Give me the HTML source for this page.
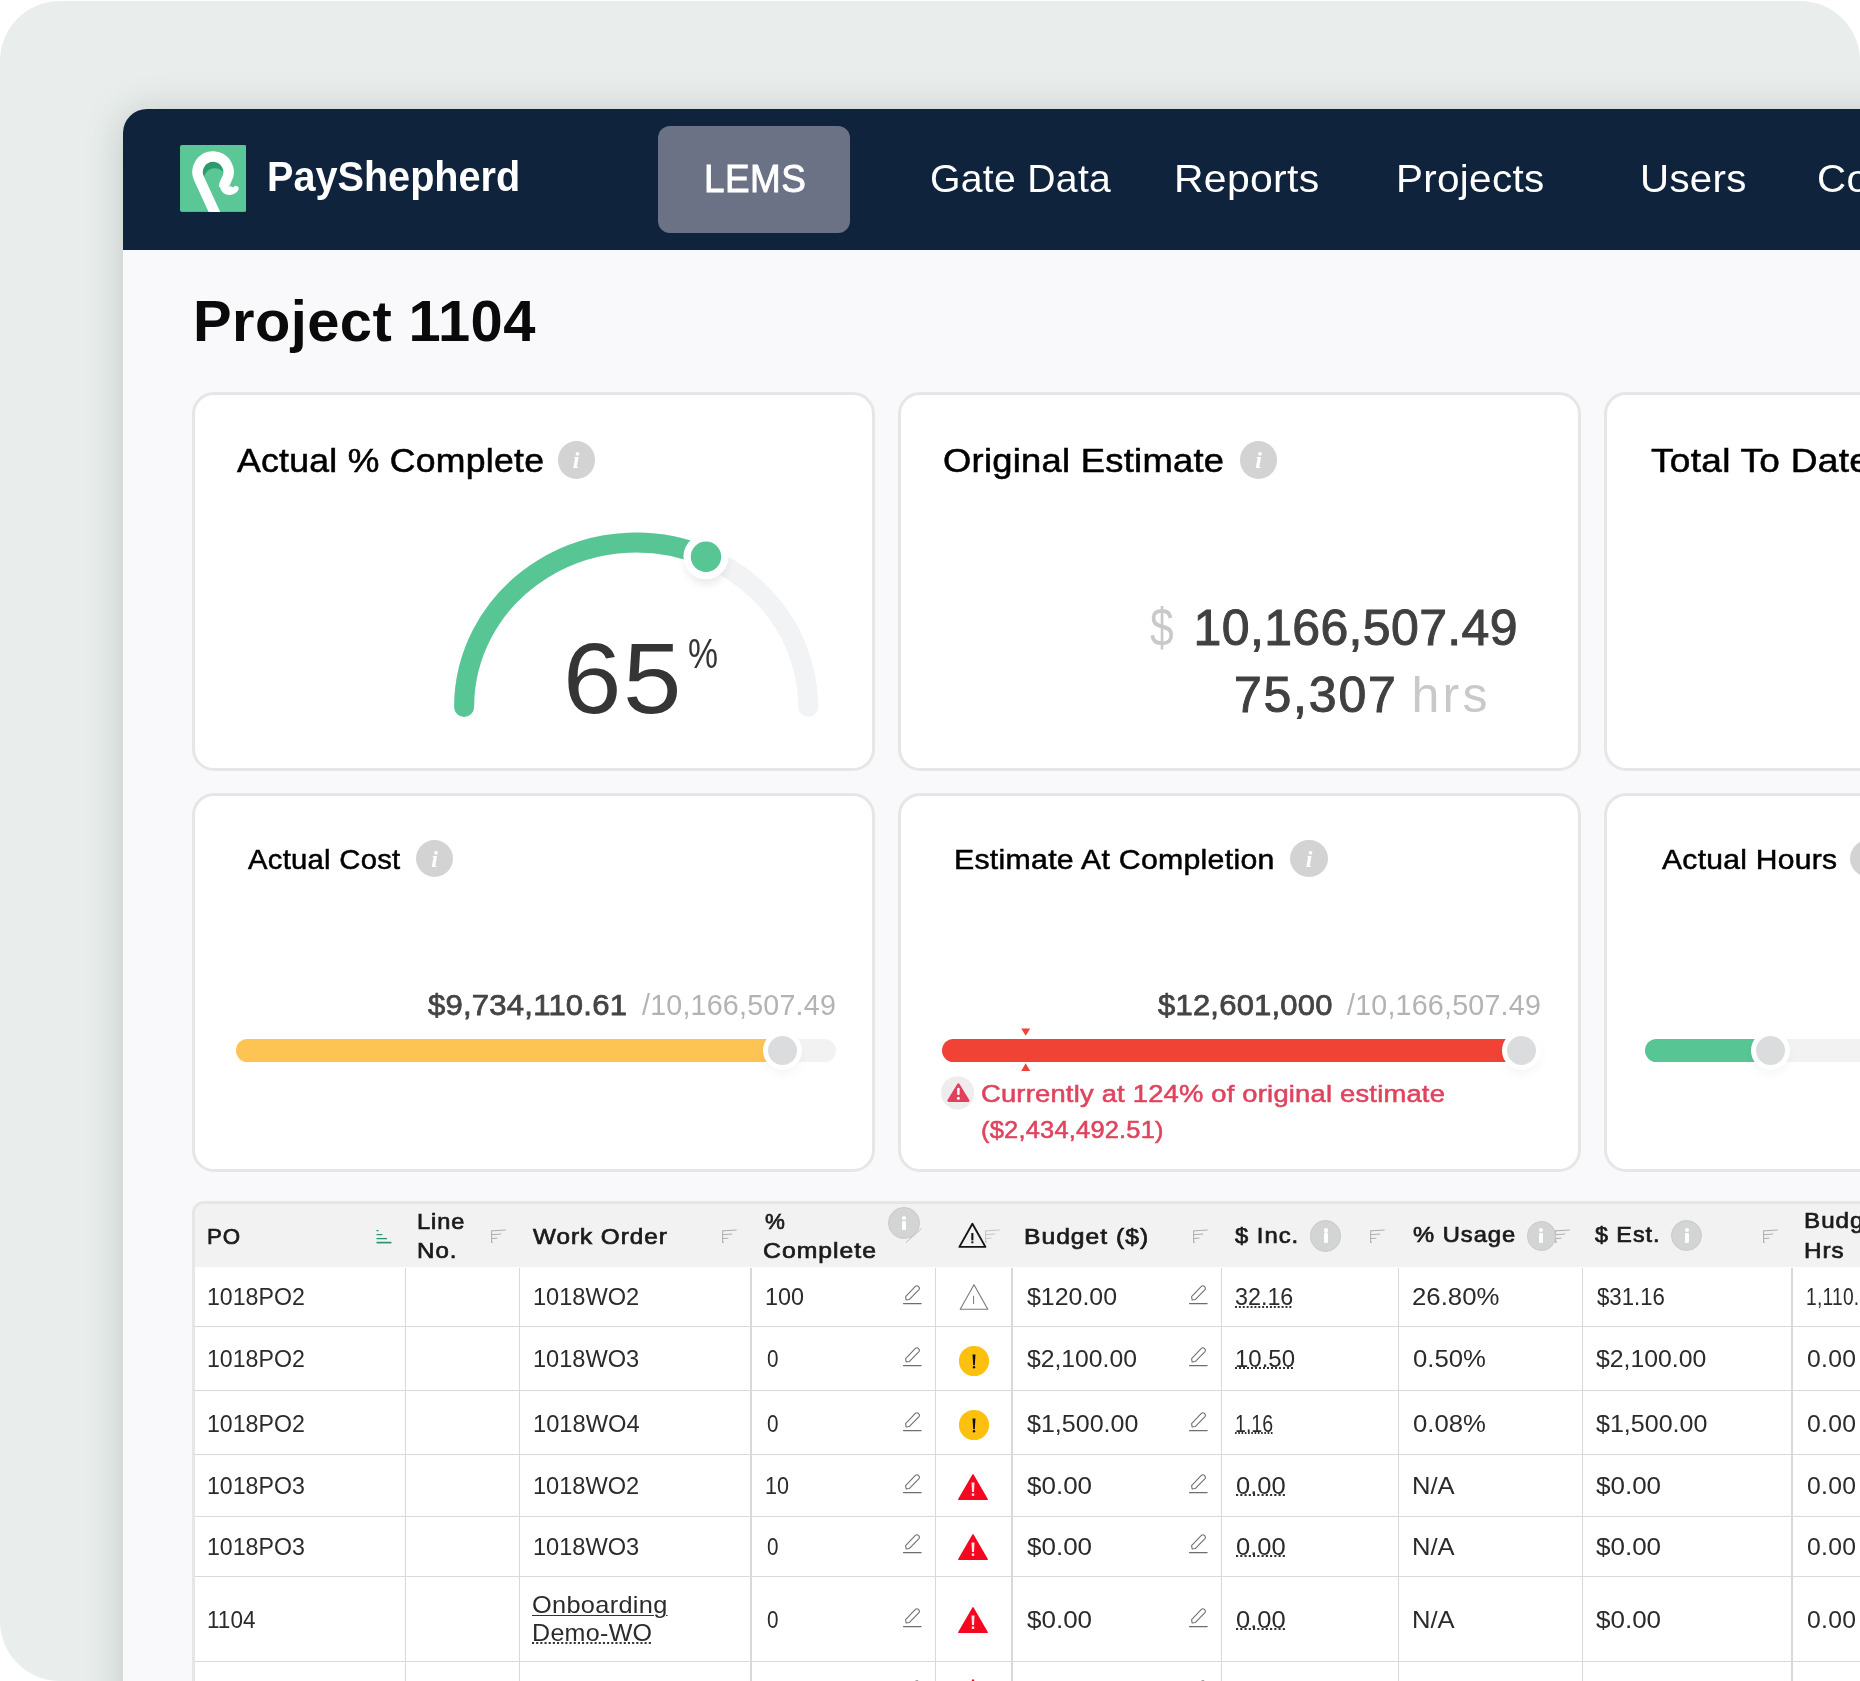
<!DOCTYPE html>
<html lang="en">
<head>
<meta charset="utf-8">
<title>Project 1104 - PayShepherd</title>
<style>
*{box-sizing:border-box;margin:0;padding:0}
html,body{width:1860px;height:1681px;overflow:hidden;background:#fff}
body{font-family:"Liberation Sans",sans-serif;color:#000;position:relative}
.abs{position:absolute}
.t{position:absolute;white-space:nowrap}
#panel{position:absolute;left:0;top:1px;width:1860px;height:1680px;background:#e9eeec;border-radius:60px}
#win{position:absolute;left:123px;top:108.5px;width:1800px;height:1700px;background:#f9f9fb;border-radius:24px 0 0 0;box-shadow:0 4px 38px rgba(40,60,55,.22);overflow:hidden}
#nav{position:absolute;left:0;top:0;width:100%;height:141.5px;background:#0f233c}
.card{position:absolute;background:#fff;border:3px solid #e6e6e7;border-radius:22px}
.info{position:absolute;border-radius:50%;color:#fff;text-align:center;font-family:"Liberation Serif",serif;font-style:italic;font-weight:bold}
.knob{position:absolute;width:39px;height:39px;border-radius:50%;background:#dbdcde;border:5.5px solid #fff;box-shadow:0 5px 9px rgba(0,0,0,.035)}
#tbl{position:absolute;width:1800px;height:600px;border:3px solid #e6e6e7;border-radius:12px 0 0 0;background:#fff}
.hinfo{position:absolute;border-radius:50%;background:#d3d4d4;border:1px solid #c9c9c9}
.hinfo i{position:absolute;left:50%;top:50%;width:4px;height:9.6px;margin:-2.8px 0 0 -2px;background:#fff;border-radius:1.2px}
.hinfo b{position:absolute;left:50%;top:50%;width:4px;height:4.2px;margin:-7.6px 0 0 -2px;background:#fff;border-radius:50%}
#root{position:absolute;left:0;top:0;width:1860px;height:1681px;overflow:hidden;will-change:transform;transform:translateZ(0)}

</style>
</head>
<body>
<div id="root">
<div id="panel"></div>
<div id="win"><div id="nav"></div></div>
<svg class="abs" style="left:179.6px;top:145.2px" width="66.4" height="66.9" viewBox="0 0 1240 1250">
<defs><clipPath id="lc"><rect x="0" y="0" width="1240" height="1250" rx="36"/></clipPath>
<clipPath id="hole"><circle cx="615" cy="510" r="196"/></clipPath></defs>
<g clip-path="url(#lc)">
<rect width="1240" height="1250" fill="#5bc797"/>
<g clip-path="url(#hole)"><rect x="380" y="280" width="480" height="330" fill="#2d9a6c"/><circle cx="650" cy="640" r="205" fill="#5bc797"/></g>
<path d="M665 1300 L357 632 A290 290 0 1 1 866 655 C 835 710 822 745 825 775" fill="none" stroke="#fff" stroke-width="196" stroke-linecap="butt" stroke-linejoin="round"/>
<path d="M824 770 C 832 830 880 862 935 852" fill="none" stroke="#fff" stroke-width="158" stroke-linecap="round"/>
<path d="M935 872 C 990 876 1025 850 1044 816" fill="none" stroke="#fff" stroke-width="104" stroke-linecap="round"/>
</g></svg>
<div class="t" id="brand" style="left:267.41px;top:156.35px;font-size:42px;line-height:42px;color:#fff;font-weight:bold;transform:scaleX(0.9432);transform-origin:0 0;">PayShepherd</div>
<div class="abs " style="left:657.7px;top:125.6px;width:192.5px;height:107.5px;background:#6b7286;border-radius:12px"></div>
<div class="t" id="n_lems" style="left:704.32px;top:159.36px;font-size:39.5px;line-height:39.5px;color:#fff;letter-spacing:0.5px;-webkit-text-stroke:0.9px #fff;transform:scaleX(0.9336);transform-origin:0 0;">LEMS</div>
<div class="t" id="n_gate" style="left:930.11px;top:159.36px;font-size:39.5px;line-height:39.5px;color:#fff;letter-spacing:0.3px;transform:scaleX(0.9913);transform-origin:0 0;">Gate Data</div>
<div class="t" id="n_rep" style="left:1174.39px;top:159.36px;font-size:39.5px;line-height:39.5px;color:#fff;letter-spacing:0.3px;transform:scaleX(1.0362);transform-origin:0 0;">Reports</div>
<div class="t" id="n_proj" style="left:1396.33px;top:159.36px;font-size:39.5px;line-height:39.5px;color:#fff;letter-spacing:0.3px;transform:scaleX(1.0231);transform-origin:0 0;">Projects</div>
<div class="t" id="n_users" style="left:1640.14px;top:159.36px;font-size:39.5px;line-height:39.5px;color:#fff;letter-spacing:0.3px;transform:scaleX(1.0199);transform-origin:0 0;">Users</div>
<div class="t" id="n_co" style="left:1817.36px;top:159.36px;font-size:39.5px;line-height:39.5px;color:#fff;letter-spacing:0.3px;transform:scaleX(1.02);transform-origin:0 0;">Contractors</div>
<div class="t" id="title" style="left:192.68px;top:292.63px;font-size:57.5px;line-height:57.5px;color:#0a0a0a;font-weight:bold;letter-spacing:0.4px;transform:scaleX(1.0069);transform-origin:0 0;">Project 1104</div>
<div class="card" style="left:191.7px;top:391.6px;width:683.3px;height:379.1px"></div>
<div class="card" style="left:897.9px;top:391.6px;width:683.3px;height:379.1px"></div>
<div class="card" style="left:1604.2px;top:391.6px;width:683.3px;height:379.1px"></div>
<div class="card" style="left:191.7px;top:793.4px;width:683.3px;height:379.1px"></div>
<div class="card" style="left:897.9px;top:793.4px;width:683.3px;height:379.1px"></div>
<div class="card" style="left:1604.2px;top:793.4px;width:683.3px;height:379.1px"></div>
<div class="t" id="c1t" style="left:236.89px;top:444.47px;font-size:33.7px;line-height:33.7px;color:#000;letter-spacing:0.25px;-webkit-text-stroke:0.55px #000;transform:scaleX(1.0569);transform-origin:0 0;">Actual % Complete</div>
<div class="info" style="left:557.50px;top:441.40px;width:37.2px;height:37.2px;background:#d3d3d3;font-size:24px;line-height:37.2px;padding-top:0.5px">i</div>
<div class="t" id="c2t" style="left:943.12px;top:444.47px;font-size:33.7px;line-height:33.7px;color:#000;letter-spacing:0.25px;-webkit-text-stroke:0.55px #000;transform:scaleX(1.0787);transform-origin:0 0;">Original Estimate</div>
<div class="info" style="left:1240.00px;top:441.40px;width:37.2px;height:37.2px;background:#d3d3d3;font-size:24px;line-height:37.2px;padding-top:0.5px">i</div>
<div class="t" id="c3t" style="left:1650.50px;top:444.47px;font-size:33.7px;line-height:33.7px;color:#000;letter-spacing:0.25px;-webkit-text-stroke:0.55px #000;transform:scaleX(1.1);transform-origin:0 0;">Total To Date</div>
<div class="t" id="c4t" style="left:247.97px;top:845.54px;font-size:27.6px;line-height:27.6px;color:#000;letter-spacing:0.25px;-webkit-text-stroke:0.5px #000;transform:scaleX(1.06);transform-origin:0 0;">Actual Cost</div>
<div class="info" style="left:416.00px;top:840.20px;width:37.2px;height:37.2px;background:#d3d3d3;font-size:24px;line-height:37.2px;padding-top:0.5px">i</div>
<div class="t" id="c5t" style="left:954.08px;top:845.54px;font-size:27.6px;line-height:27.6px;color:#000;letter-spacing:0.25px;-webkit-text-stroke:0.5px #000;transform:scaleX(1.0969);transform-origin:0 0;">Estimate At Completion</div>
<div class="info" style="left:1290.40px;top:840.30px;width:37.2px;height:37.2px;background:#d3d3d3;font-size:24px;line-height:37.2px;padding-top:0.5px">i</div>
<div class="t" id="c6t" style="left:1661.67px;top:845.54px;font-size:27.6px;line-height:27.6px;color:#000;letter-spacing:0.25px;-webkit-text-stroke:0.5px #000;transform:scaleX(1.0897);transform-origin:0 0;">Actual Hours</div>
<div class="info" style="left:1849.90px;top:840.10px;width:37.2px;height:37.2px;background:#d3d3d3;font-size:24px;line-height:37.2px;padding-top:0.5px">i</div>
<svg class="abs" style="left:430px;top:510px" width="420" height="230" viewBox="430 510 420 230">
<defs><filter id="ks" x="-50%" y="-50%" width="200%" height="200%"><feGaussianBlur stdDeviation="5"/></filter></defs>
<path d="M464.10 707.0 A172.05 164.4 0 0 1 808.20 707.0" fill="none" stroke="#f2f3f5" stroke-width="20" stroke-linecap="round"/>
<path d="M464.10 707.0 A172.05 164.4 0 0 1 706.0 556.76" fill="none" stroke="#58c595" stroke-width="20" stroke-linecap="round"/>
<circle cx="706.0" cy="563.76" r="20" fill="#000" opacity=".09" filter="url(#ks)"/>
<circle cx="706.0" cy="556.76" r="22.6" fill="#fff"/>
<circle cx="706.0" cy="556.76" r="15.2" fill="#58c595"/>
</svg>
<div class="t" id="g65" style="left:562.55px;top:628.15px;font-size:100px;line-height:100px;color:#353535;letter-spacing:1.5px;transform:scaleX(1.0508);transform-origin:0 0;">65</div>
<div class="t" id="gpc" style="left:687.61px;top:633.32px;font-size:42.5px;line-height:42.5px;color:#353535;transform:scaleX(0.7944);transform-origin:0 0;">%</div>
<div class="t" id="c2d" style="left:1149.80px;top:599.59px;font-size:54px;line-height:54px;color:#c9c9c9;transform:scaleX(0.7867);transform-origin:0 0;">$</div>
<div class="t" id="c2n" style="left:1193.60px;top:602.77px;font-size:50px;line-height:50px;color:#404040;letter-spacing:0.346px;-webkit-text-stroke:1.0px #404040;">10,166,507.49</div>
<div class="t" id="c2h" style="left:1233.90px;top:670.47px;font-size:50px;line-height:50px;color:#404040;letter-spacing:1.796px;-webkit-text-stroke:1.0px #404040;">75,307</div>
<div class="t" id="c2u" style="left:1411.40px;top:670.47px;font-size:50px;line-height:50px;color:#c9c9c9;letter-spacing:3.271px;">hrs</div>
<div class="abs " style="left:236.0px;top:1039.0px;width:599.8px;height:22.6px;background:#f2f2f3;border-radius:12px"></div>
<div class="abs " style="left:236.0px;top:1039.0px;width:545.9px;height:22.6px;background:#fdc453;border-radius:12px 0 0 12px"></div>
<div class="knob" style="left:762.70px;top:1030.70px"></div>
<div class="abs " style="left:941.5px;top:1039.0px;width:599.5px;height:22.6px;background:#f2f2f3;border-radius:12px"></div>
<div class="abs " style="left:941.5px;top:1039.0px;width:579.4000000000001px;height:22.6px;background:#f04235;border-radius:12px 0 0 12px"></div>
<div class="knob" style="left:1501.70px;top:1030.70px"></div>
<div class="abs " style="left:1645.0px;top:1039.0px;width:599.8px;height:22.6px;background:#f2f2f3;border-radius:12px"></div>
<div class="abs " style="left:1645.0px;top:1039.0px;width:124.79999999999995px;height:22.6px;background:#58c595;border-radius:12px 0 0 12px"></div>
<div class="knob" style="left:1750.60px;top:1030.70px"></div>
<div class="t" id="c4a" style="left:427.70px;top:990.85px;font-size:29.0px;line-height:29.0px;color:#444;letter-spacing:0.2px;-webkit-text-stroke:0.75px #444;transform:scaleX(1.0716);transform-origin:0 0;">$9,734,110.61</div>
<div class="t" id="c4b" style="left:642.40px;top:990.85px;font-size:29.0px;line-height:29.0px;color:#b3b3b3;letter-spacing:0.2px;transform:scaleX(0.9883);transform-origin:0 0;">/10,166,507.49</div>
<div class="t" id="c5a" style="left:1158.20px;top:990.85px;font-size:29.0px;line-height:29.0px;color:#444;letter-spacing:0.2px;-webkit-text-stroke:0.75px #444;transform:scaleX(1.0688);transform-origin:0 0;">$12,601,000</div>
<div class="t" id="c5b" style="left:1347.40px;top:990.85px;font-size:29.0px;line-height:29.0px;color:#b3b3b3;letter-spacing:0.2px;transform:scaleX(0.9883);transform-origin:0 0;">/10,166,507.49</div>
<svg class="abs" style="left:1020px;top:1026px" width="12" height="48" viewBox="1020 1026 12 48"><path d="M1021.2 1028.4h9l-4.5 7.4z M1021.2 1070.9h9l-4.5 -7.6z" fill="#f04235"/></svg>
<svg class="abs" style="left:940px;top:1075px" width="36" height="36" viewBox="940 1075 36 36"><circle cx="957.6" cy="1092.8" r="16.6" fill="#eeeced"/><path d="M958.4 1084.6 L968.2 1100.6 H948.6 Z" fill="#e0405d" stroke="#e0405d" stroke-width="2.6" stroke-linejoin="round"/><rect x="957.2" y="1087.8" width="2.4" height="7.2" rx="1" fill="#fff"/><circle cx="958.4" cy="1098.2" r="1.5" fill="#fff"/></svg>
<div class="t" id="w1" style="left:980.78px;top:1082.30px;font-size:24.1px;line-height:24.1px;color:#e0435e;letter-spacing:0.2px;-webkit-text-stroke:0.55px #e0435e;transform:scaleX(1.1337);transform-origin:0 0;">Currently at 124% of original estimate</div>
<div class="t" id="w2" style="left:980.53px;top:1118.10px;font-size:24.1px;line-height:24.1px;color:#e0435e;letter-spacing:0.2px;-webkit-text-stroke:0.55px #e0435e;transform:scaleX(1.0557);transform-origin:0 0;">($2,434,492.51)</div>
<div id="tbl" style="left:191.8px;top:1201.3px"></div>
<div class="abs " style="left:194.8px;top:1204.3px;width:1700px;height:63.2px;background:#f2f2f2;border-radius:9px 0 0 0"></div>
<div class="abs " style="left:194.8px;top:1326px;width:1700px;height:1px;background:#ddd8da;"></div>
<div class="abs " style="left:194.8px;top:1390px;width:1700px;height:1px;background:#ddd8da;"></div>
<div class="abs " style="left:194.8px;top:1454px;width:1700px;height:1px;background:#ddd8da;"></div>
<div class="abs " style="left:194.8px;top:1516px;width:1700px;height:1px;background:#ddd8da;"></div>
<div class="abs " style="left:194.8px;top:1576px;width:1700px;height:1px;background:#ddd8da;"></div>
<div class="abs " style="left:194.8px;top:1661px;width:1700px;height:1px;background:#ddd8da;"></div>
<div class="abs " style="left:404.75px;top:1267.5px;width:1.5px;height:500px;background:#dcd8da;"></div>
<div class="abs " style="left:518.75px;top:1267.5px;width:1.5px;height:500px;background:#dcd8da;"></div>
<div class="abs " style="left:750.25px;top:1267.5px;width:1.5px;height:500px;background:#dcd8da;"></div>
<div class="abs " style="left:934.65px;top:1267.5px;width:1.5px;height:500px;background:#dcd8da;"></div>
<div class="abs " style="left:1011.45px;top:1267.5px;width:1.5px;height:500px;background:#dcd8da;"></div>
<div class="abs " style="left:1220.95px;top:1267.5px;width:1.5px;height:500px;background:#dcd8da;"></div>
<div class="abs " style="left:1397.85px;top:1267.5px;width:1.5px;height:500px;background:#dcd8da;"></div>
<div class="abs " style="left:1581.85px;top:1267.5px;width:1.5px;height:500px;background:#dcd8da;"></div>
<div class="abs " style="left:1791.35px;top:1267.5px;width:1.5px;height:500px;background:#dcd8da;"></div>
<div class="t" id="h_po" style="left:206.94px;top:1225.58px;font-size:22px;line-height:22px;color:#1b1b1b;letter-spacing:0.9px;-webkit-text-stroke:0.7px #1b1b1b;transform:scaleX(1.0132);transform-origin:0 0;">PO</div>
<div class="t" id="h_line" style="left:416.90px;top:1210.88px;font-size:22px;line-height:22px;color:#1b1b1b;letter-spacing:0.9px;-webkit-text-stroke:0.7px #1b1b1b;transform:scaleX(1.0718);transform-origin:0 0;">Line</div>
<div class="t" id="h_no" style="left:416.89px;top:1240.28px;font-size:22px;line-height:22px;color:#1b1b1b;letter-spacing:0.9px;-webkit-text-stroke:0.7px #1b1b1b;transform:scaleX(1.0946);transform-origin:0 0;">No.</div>
<div class="t" id="h_wo" style="left:533.09px;top:1225.98px;font-size:22px;line-height:22px;color:#1b1b1b;letter-spacing:0.9px;-webkit-text-stroke:0.7px #1b1b1b;transform:scaleX(1.1023);transform-origin:0 0;">Work Order</div>
<div class="t" id="h_pc" style="left:765.36px;top:1211.38px;font-size:22px;line-height:22px;color:#1b1b1b;letter-spacing:0.9px;-webkit-text-stroke:0.7px #1b1b1b;transform:scaleX(1.0152);transform-origin:0 0;">%</div>
<div class="t" id="h_cmp" style="left:762.87px;top:1240.08px;font-size:22px;line-height:22px;color:#1b1b1b;letter-spacing:0.9px;-webkit-text-stroke:0.7px #1b1b1b;transform:scaleX(1.1249);transform-origin:0 0;">Complete</div>
<div class="t" id="h_bud" style="left:1024.07px;top:1225.58px;font-size:22px;line-height:22px;color:#1b1b1b;letter-spacing:0.9px;-webkit-text-stroke:0.7px #1b1b1b;transform:scaleX(1.1199);transform-origin:0 0;">Budget ($)</div>
<div class="t" id="h_inc" style="left:1234.58px;top:1224.98px;font-size:22px;line-height:22px;color:#1b1b1b;letter-spacing:0.9px;-webkit-text-stroke:0.7px #1b1b1b;transform:scaleX(1.083);transform-origin:0 0;">$ Inc.</div>
<div class="t" id="h_use" style="left:1412.68px;top:1224.38px;font-size:22px;line-height:22px;color:#1b1b1b;letter-spacing:0.9px;-webkit-text-stroke:0.7px #1b1b1b;transform:scaleX(1.0796);transform-origin:0 0;">% Usage</div>
<div class="t" id="h_est" style="left:1595.07px;top:1224.38px;font-size:22px;line-height:22px;color:#1b1b1b;letter-spacing:0.9px;-webkit-text-stroke:0.7px #1b1b1b;transform:scaleX(1.0608);transform-origin:0 0;">$ Est.</div>
<div class="t" id="h_bh1" style="left:1803.79px;top:1209.88px;font-size:22px;line-height:22px;color:#1b1b1b;letter-spacing:0.9px;-webkit-text-stroke:0.7px #1b1b1b;transform:scaleX(1.1);transform-origin:0 0;">Budget</div>
<div class="t" id="h_bh2" style="left:1803.79px;top:1239.58px;font-size:22px;line-height:22px;color:#1b1b1b;letter-spacing:0.9px;-webkit-text-stroke:0.7px #1b1b1b;transform:scaleX(1.1);transform-origin:0 0;">Hrs</div>
<svg class="abs" style="left:376.0px;top:1229.0px" width="17" height="15" viewBox="0 0 17 15"><g stroke="#2a9470" fill="none"><path stroke-width="1.3" d="M0.5 1.6H2.6"/><path stroke-width="1.2" d="M0.5 5.6H6.4"/><path stroke-width="1.3" d="M0.5 9.6H11"/><path stroke-width="1.7" d="M0.5 13.6H15.4"/></g></svg>
<svg class="abs" style="left:490.5px;top:1229.0px" width="16" height="15" viewBox="0 0 16 15"><g stroke="#a9a9a9" stroke-width="0.95" fill="none"><path d="M0.4 1.9L14.6 1.0 M0.4 5.7L10.2 5.0 M0.4 9.6L6.4 9.1 M0.4 13.3L2.0 13.2 M0.6 1.6V13.4" /></g></svg>
<svg class="abs" style="left:722.3px;top:1229.0px" width="16" height="15" viewBox="0 0 16 15"><g stroke="#a9a9a9" stroke-width="0.95" fill="none"><path d="M0.4 1.9L14.6 1.0 M0.4 5.7L10.2 5.0 M0.4 9.6L6.4 9.1 M0.4 13.3L2.0 13.2 M0.6 1.6V13.4" /></g></svg>
<svg class="abs" style="left:904px;top:1226px" width="20" height="18" viewBox="0 0 20 18"><path d="M2 16.6L17.4 2.6" stroke="#b5b5b5" stroke-width="0.9"/></svg>
<div class="hinfo" style="left:888.10px;top:1207.30px;width:32.0px;height:32.0px"><i></i><b></b></div>
<svg class="abs" style="left:984.6px;top:1228.6px" width="16" height="15" viewBox="0 0 16 15"><g stroke="#c2c2c2" stroke-width="0.95" fill="none"><path d="M0.4 1.9L14.6 1.0 M0.4 5.7L10.2 5.0 M0.4 9.6L6.4 9.1 M0.4 13.3L2.0 13.2 M0.6 1.6V13.4" /></g></svg>
<svg class="abs" style="left:955px;top:1219px" width="36" height="32" viewBox="955 1219 36 32"><path d="M972.4 1223.8 L985.4 1246.9 H959.4 Z" fill="none" stroke="#151515" stroke-width="1.9" stroke-linejoin="round"/><rect x="971.3" y="1233.0" width="2.1" height="7.4" fill="#151515"/><rect x="971.3" y="1241.4" width="2.1" height="1.8" fill="#151515"/></svg>
<svg class="abs" style="left:1192.8px;top:1229.0px" width="16" height="15" viewBox="0 0 16 15"><g stroke="#a9a9a9" stroke-width="0.95" fill="none"><path d="M0.4 1.9L14.6 1.0 M0.4 5.7L10.2 5.0 M0.4 9.6L6.4 9.1 M0.4 13.3L2.0 13.2 M0.6 1.6V13.4" /></g></svg>
<div class="hinfo" style="left:1310.10px;top:1220.40px;width:31.2px;height:31.2px"><i></i><b></b></div>
<svg class="abs" style="left:1369.5px;top:1229.0px" width="16" height="15" viewBox="0 0 16 15"><g stroke="#a9a9a9" stroke-width="0.95" fill="none"><path d="M0.4 1.9L14.6 1.0 M0.4 5.7L10.2 5.0 M0.4 9.6L6.4 9.1 M0.4 13.3L2.0 13.2 M0.6 1.6V13.4" /></g></svg>
<svg class="abs" style="left:1555.0px;top:1228.5px" width="16" height="15" viewBox="0 0 16 15"><g stroke="#a9a9a9" stroke-width="0.95" fill="none"><path d="M0.4 1.9L14.6 1.0 M0.4 5.7L10.2 5.0 M0.4 9.6L6.4 9.1 M0.4 13.3L2.0 13.2 M0.6 1.6V13.4" /></g></svg>
<div class="hinfo" style="left:1526.50px;top:1221.00px;width:29.6px;height:29.6px"><i></i><b></b></div>
<div class="hinfo" style="left:1671.00px;top:1220.20px;width:31.2px;height:31.2px"><i></i><b></b></div>
<svg class="abs" style="left:1762.8px;top:1228.6px" width="16" height="15" viewBox="0 0 16 15"><g stroke="#a9a9a9" stroke-width="0.95" fill="none"><path d="M0.4 1.9L14.6 1.0 M0.4 5.7L10.2 5.0 M0.4 9.6L6.4 9.1 M0.4 13.3L2.0 13.2 M0.6 1.6V13.4" /></g></svg>
<div class="t" id="r0po" style="left:206.94px;top:1285.48px;font-size:24px;line-height:24px;color:#2b2b2b;transform:scaleX(0.9644);transform-origin:0 0;">1018PO2</div>
<div class="t" id="r0wo" style="left:532.52px;top:1285.48px;font-size:24px;line-height:24px;color:#2b2b2b;transform:scaleX(0.983);transform-origin:0 0;">1018WO2</div>
<div class="t" id="r0pc" style="left:764.63px;top:1285.48px;font-size:24px;line-height:24px;color:#2b2b2b;transform:scaleX(0.9743);transform-origin:0 0;">100</div>
<div class="t" id="r0bud" style="left:1026.70px;top:1285.48px;font-size:24px;line-height:24px;color:#2b2b2b;transform:scaleX(1.0381);transform-origin:0 0;">$120.00</div>
<div class="t" id="r0inc" style="left:1235.40px;top:1285.48px;font-size:24px;line-height:24px;color:#2b2b2b;transform:scaleX(0.9713);transform-origin:0 0;text-decoration:underline dotted #333;text-decoration-thickness:1.5px;text-underline-offset:1px;">32.16</div>
<div class="t" id="r0use" style="left:1412.43px;top:1285.48px;font-size:24px;line-height:24px;color:#2b2b2b;transform:scaleX(1.0742);transform-origin:0 0;">26.80%</div>
<div class="t" id="r0est" style="left:1596.80px;top:1285.48px;font-size:24px;line-height:24px;color:#2b2b2b;transform:scaleX(0.9253);transform-origin:0 0;">$31.16</div>
<div class="t" id="r0bh" style="left:1806.30px;top:1285.48px;font-size:24px;line-height:24px;color:#2b2b2b;letter-spacing:0.3px;transform:scaleX(0.8);transform-origin:0 0;">1,110.00</div>
<svg class="abs" style="left:902.6px;top:1285.2px" width="19" height="20" viewBox="0 0 19 20"><g fill="none" stroke="#6e6e6e" stroke-width="1.05" stroke-linejoin="round" stroke-linecap="round"><path d="M3.1 14.9 L2.6 11.6 L12.6 1.2 Q14.2 0.2 15.6 1.6 Q17 3 16 4.6 L6.2 14.6 Z"/><path d="M0.4 18.6H18.2"/></g></svg>
<svg class="abs" style="left:1189.2px;top:1285.2px" width="19" height="20" viewBox="0 0 19 20"><g fill="none" stroke="#6e6e6e" stroke-width="1.05" stroke-linejoin="round" stroke-linecap="round"><path d="M3.1 14.9 L2.6 11.6 L12.6 1.2 Q14.2 0.2 15.6 1.6 Q17 3 16 4.6 L6.2 14.6 Z"/><path d="M0.4 18.6H18.2"/></g></svg>
<svg class="abs" style="left:957.6px;top:1282.0px" width="32" height="30" viewBox="-16 -15 32 30"><path d="M0 -12.3 L13.8 12.3 H-13.8 Z" fill="none" stroke="#7a7a7a" stroke-width="1.1" stroke-linejoin="round"/><path d="M-0.4 -1.2V7" stroke="#7a7a7a" stroke-width="1"/></svg>
<div class="t" id="r1po" style="left:206.94px;top:1346.88px;font-size:24px;line-height:24px;color:#2b2b2b;transform:scaleX(0.9644);transform-origin:0 0;">1018PO2</div>
<div class="t" id="r1wo" style="left:532.52px;top:1346.88px;font-size:24px;line-height:24px;color:#2b2b2b;transform:scaleX(0.983);transform-origin:0 0;">1018WO3</div>
<div class="t" id="r1pc" style="left:767.00px;top:1346.88px;font-size:24px;line-height:24px;color:#2b2b2b;transform:scaleX(0.8615);transform-origin:0 0;">0</div>
<div class="t" id="r1bud" style="left:1026.80px;top:1346.88px;font-size:24px;line-height:24px;color:#2b2b2b;transform:scaleX(1.0299);transform-origin:0 0;">$2,100.00</div>
<div class="t" id="r1inc" style="left:1234.80px;top:1346.88px;font-size:24px;line-height:24px;color:#2b2b2b;transform:scaleX(0.9998);transform-origin:0 0;text-decoration:underline dotted #333;text-decoration-thickness:1.5px;text-underline-offset:1px;">10.50</div>
<div class="t" id="r1use" style="left:1412.90px;top:1346.88px;font-size:24px;line-height:24px;color:#2b2b2b;transform:scaleX(1.0707);transform-origin:0 0;">0.50%</div>
<div class="t" id="r1est" style="left:1596.40px;top:1346.88px;font-size:24px;line-height:24px;color:#2b2b2b;transform:scaleX(1.0336);transform-origin:0 0;">$2,100.00</div>
<div class="t" id="r1bh" style="left:1806.60px;top:1346.88px;font-size:24px;line-height:24px;color:#2b2b2b;letter-spacing:0.3px;transform:scaleX(1.03);transform-origin:0 0;">0.00</div>
<svg class="abs" style="left:902.6px;top:1346.6000000000001px" width="19" height="20" viewBox="0 0 19 20"><g fill="none" stroke="#6e6e6e" stroke-width="1.05" stroke-linejoin="round" stroke-linecap="round"><path d="M3.1 14.9 L2.6 11.6 L12.6 1.2 Q14.2 0.2 15.6 1.6 Q17 3 16 4.6 L6.2 14.6 Z"/><path d="M0.4 18.6H18.2"/></g></svg>
<svg class="abs" style="left:1189.2px;top:1346.6000000000001px" width="19" height="20" viewBox="0 0 19 20"><g fill="none" stroke="#6e6e6e" stroke-width="1.05" stroke-linejoin="round" stroke-linecap="round"><path d="M3.1 14.9 L2.6 11.6 L12.6 1.2 Q14.2 0.2 15.6 1.6 Q17 3 16 4.6 L6.2 14.6 Z"/><path d="M0.4 18.6H18.2"/></g></svg>
<svg class="abs" style="left:957.6px;top:1344.5px" width="32" height="32" viewBox="-16 -16 32 32"><circle r="15.1" fill="#fdc00f"/><path d="M-1.5 -6.6 H1.5 L0.8 4.2 H-0.8 Z" fill="#111"/><circle cy="6.2" r="1.2" fill="#111"/></svg>
<div class="t" id="r2po" style="left:206.94px;top:1411.98px;font-size:24px;line-height:24px;color:#2b2b2b;transform:scaleX(0.9644);transform-origin:0 0;">1018PO2</div>
<div class="t" id="r2wo" style="left:532.51px;top:1411.98px;font-size:24px;line-height:24px;color:#2b2b2b;transform:scaleX(0.9868);transform-origin:0 0;">1018WO4</div>
<div class="t" id="r2pc" style="left:767.00px;top:1411.98px;font-size:24px;line-height:24px;color:#2b2b2b;transform:scaleX(0.8615);transform-origin:0 0;">0</div>
<div class="t" id="r2bud" style="left:1026.80px;top:1411.98px;font-size:24px;line-height:24px;color:#2b2b2b;transform:scaleX(1.043);transform-origin:0 0;">$1,500.00</div>
<div class="t" id="r2inc" style="left:1234.98px;top:1411.98px;font-size:24px;line-height:24px;color:#2b2b2b;transform:scaleX(0.8156);transform-origin:0 0;text-decoration:underline dotted #333;text-decoration-thickness:1.5px;text-underline-offset:1px;">1.16</div>
<div class="t" id="r2use" style="left:1412.90px;top:1411.98px;font-size:24px;line-height:24px;color:#2b2b2b;transform:scaleX(1.0707);transform-origin:0 0;">0.08%</div>
<div class="t" id="r2est" style="left:1596.40px;top:1411.98px;font-size:24px;line-height:24px;color:#2b2b2b;transform:scaleX(1.043);transform-origin:0 0;">$1,500.00</div>
<div class="t" id="r2bh" style="left:1806.60px;top:1411.98px;font-size:24px;line-height:24px;color:#2b2b2b;letter-spacing:0.3px;transform:scaleX(1.03);transform-origin:0 0;">0.00</div>
<svg class="abs" style="left:902.6px;top:1411.7px" width="19" height="20" viewBox="0 0 19 20"><g fill="none" stroke="#6e6e6e" stroke-width="1.05" stroke-linejoin="round" stroke-linecap="round"><path d="M3.1 14.9 L2.6 11.6 L12.6 1.2 Q14.2 0.2 15.6 1.6 Q17 3 16 4.6 L6.2 14.6 Z"/><path d="M0.4 18.6H18.2"/></g></svg>
<svg class="abs" style="left:1189.2px;top:1411.7px" width="19" height="20" viewBox="0 0 19 20"><g fill="none" stroke="#6e6e6e" stroke-width="1.05" stroke-linejoin="round" stroke-linecap="round"><path d="M3.1 14.9 L2.6 11.6 L12.6 1.2 Q14.2 0.2 15.6 1.6 Q17 3 16 4.6 L6.2 14.6 Z"/><path d="M0.4 18.6H18.2"/></g></svg>
<svg class="abs" style="left:957.6px;top:1409.0px" width="32" height="32" viewBox="-16 -16 32 32"><circle r="15.1" fill="#fdc00f"/><path d="M-1.5 -6.6 H1.5 L0.8 4.2 H-0.8 Z" fill="#111"/><circle cy="6.2" r="1.2" fill="#111"/></svg>
<div class="t" id="r3po" style="left:206.94px;top:1473.88px;font-size:24px;line-height:24px;color:#2b2b2b;transform:scaleX(0.9644);transform-origin:0 0;">1018PO3</div>
<div class="t" id="r3wo" style="left:532.52px;top:1473.88px;font-size:24px;line-height:24px;color:#2b2b2b;transform:scaleX(0.983);transform-origin:0 0;">1018WO2</div>
<div class="t" id="r3pc" style="left:764.70px;top:1473.88px;font-size:24px;line-height:24px;color:#2b2b2b;transform:scaleX(0.8995);transform-origin:0 0;">10</div>
<div class="t" id="r3bud" style="left:1026.80px;top:1473.88px;font-size:24px;line-height:24px;color:#2b2b2b;transform:scaleX(1.0836);transform-origin:0 0;">$0.00</div>
<div class="t" id="r3inc" style="left:1236.00px;top:1473.88px;font-size:24px;line-height:24px;color:#2b2b2b;transform:scaleX(1.0633);transform-origin:0 0;text-decoration:underline dotted #333;text-decoration-thickness:1.5px;text-underline-offset:1px;">0.00</div>
<div class="t" id="r3use" style="left:1411.83px;top:1473.88px;font-size:24px;line-height:24px;color:#2b2b2b;transform:scaleX(1.0667);transform-origin:0 0;">N/A</div>
<div class="t" id="r3est" style="left:1596.40px;top:1473.88px;font-size:24px;line-height:24px;color:#2b2b2b;transform:scaleX(1.0836);transform-origin:0 0;">$0.00</div>
<div class="t" id="r3bh" style="left:1806.60px;top:1473.88px;font-size:24px;line-height:24px;color:#2b2b2b;letter-spacing:0.3px;transform:scaleX(1.03);transform-origin:0 0;">0.00</div>
<svg class="abs" style="left:902.6px;top:1473.6000000000001px" width="19" height="20" viewBox="0 0 19 20"><g fill="none" stroke="#6e6e6e" stroke-width="1.05" stroke-linejoin="round" stroke-linecap="round"><path d="M3.1 14.9 L2.6 11.6 L12.6 1.2 Q14.2 0.2 15.6 1.6 Q17 3 16 4.6 L6.2 14.6 Z"/><path d="M0.4 18.6H18.2"/></g></svg>
<svg class="abs" style="left:1189.2px;top:1473.6000000000001px" width="19" height="20" viewBox="0 0 19 20"><g fill="none" stroke="#6e6e6e" stroke-width="1.05" stroke-linejoin="round" stroke-linecap="round"><path d="M3.1 14.9 L2.6 11.6 L12.6 1.2 Q14.2 0.2 15.6 1.6 Q17 3 16 4.6 L6.2 14.6 Z"/><path d="M0.4 18.6H18.2"/></g></svg>
<svg class="abs" style="left:956.3px;top:1471.6px" width="34" height="30" viewBox="-17 -15 34 30"><path d="M0 -12.2 L14.2 12.4 H-14.2 Z" fill="#f4071f" stroke="#f4071f" stroke-width="1.4" stroke-linejoin="round"/><path d="M-1.5 -4.6 H1.5 L1.0 5.0 H-1.0 Z" fill="#fbe9ea"/><rect x="-1.2" y="6.4" width="2.4" height="2.5" fill="#fbe9ea"/></svg>
<div class="t" id="r4po" style="left:206.94px;top:1534.68px;font-size:24px;line-height:24px;color:#2b2b2b;transform:scaleX(0.9644);transform-origin:0 0;">1018PO3</div>
<div class="t" id="r4wo" style="left:532.52px;top:1534.68px;font-size:24px;line-height:24px;color:#2b2b2b;transform:scaleX(0.983);transform-origin:0 0;">1018WO3</div>
<div class="t" id="r4pc" style="left:767.00px;top:1534.68px;font-size:24px;line-height:24px;color:#2b2b2b;transform:scaleX(0.8615);transform-origin:0 0;">0</div>
<div class="t" id="r4bud" style="left:1026.80px;top:1534.68px;font-size:24px;line-height:24px;color:#2b2b2b;transform:scaleX(1.0836);transform-origin:0 0;">$0.00</div>
<div class="t" id="r4inc" style="left:1236.00px;top:1534.68px;font-size:24px;line-height:24px;color:#2b2b2b;transform:scaleX(1.0633);transform-origin:0 0;text-decoration:underline dotted #333;text-decoration-thickness:1.5px;text-underline-offset:1px;">0.00</div>
<div class="t" id="r4use" style="left:1411.83px;top:1534.68px;font-size:24px;line-height:24px;color:#2b2b2b;transform:scaleX(1.0667);transform-origin:0 0;">N/A</div>
<div class="t" id="r4est" style="left:1596.40px;top:1534.68px;font-size:24px;line-height:24px;color:#2b2b2b;transform:scaleX(1.0836);transform-origin:0 0;">$0.00</div>
<div class="t" id="r4bh" style="left:1806.60px;top:1534.68px;font-size:24px;line-height:24px;color:#2b2b2b;letter-spacing:0.3px;transform:scaleX(1.03);transform-origin:0 0;">0.00</div>
<svg class="abs" style="left:902.6px;top:1534.4px" width="19" height="20" viewBox="0 0 19 20"><g fill="none" stroke="#6e6e6e" stroke-width="1.05" stroke-linejoin="round" stroke-linecap="round"><path d="M3.1 14.9 L2.6 11.6 L12.6 1.2 Q14.2 0.2 15.6 1.6 Q17 3 16 4.6 L6.2 14.6 Z"/><path d="M0.4 18.6H18.2"/></g></svg>
<svg class="abs" style="left:1189.2px;top:1534.4px" width="19" height="20" viewBox="0 0 19 20"><g fill="none" stroke="#6e6e6e" stroke-width="1.05" stroke-linejoin="round" stroke-linecap="round"><path d="M3.1 14.9 L2.6 11.6 L12.6 1.2 Q14.2 0.2 15.6 1.6 Q17 3 16 4.6 L6.2 14.6 Z"/><path d="M0.4 18.6H18.2"/></g></svg>
<svg class="abs" style="left:956.3px;top:1532.3px" width="34" height="30" viewBox="-17 -15 34 30"><path d="M0 -12.2 L14.2 12.4 H-14.2 Z" fill="#f4071f" stroke="#f4071f" stroke-width="1.4" stroke-linejoin="round"/><path d="M-1.5 -4.6 H1.5 L1.0 5.0 H-1.0 Z" fill="#fbe9ea"/><rect x="-1.2" y="6.4" width="2.4" height="2.5" fill="#fbe9ea"/></svg>
<div class="t" id="r5po" style="left:206.96px;top:1607.78px;font-size:24px;line-height:24px;color:#2b2b2b;transform:scaleX(0.9391);transform-origin:0 0;">1104</div>
<div class="t" id="r5pc" style="left:767.00px;top:1607.78px;font-size:24px;line-height:24px;color:#2b2b2b;transform:scaleX(0.8615);transform-origin:0 0;">0</div>
<div class="t" id="r5bud" style="left:1026.80px;top:1607.78px;font-size:24px;line-height:24px;color:#2b2b2b;transform:scaleX(1.0836);transform-origin:0 0;">$0.00</div>
<div class="t" id="r5inc" style="left:1236.00px;top:1607.78px;font-size:24px;line-height:24px;color:#2b2b2b;transform:scaleX(1.0633);transform-origin:0 0;text-decoration:underline dotted #333;text-decoration-thickness:1.5px;text-underline-offset:1px;">0.00</div>
<div class="t" id="r5use" style="left:1411.83px;top:1607.78px;font-size:24px;line-height:24px;color:#2b2b2b;transform:scaleX(1.0667);transform-origin:0 0;">N/A</div>
<div class="t" id="r5est" style="left:1596.40px;top:1607.78px;font-size:24px;line-height:24px;color:#2b2b2b;transform:scaleX(1.0836);transform-origin:0 0;">$0.00</div>
<div class="t" id="r5bh" style="left:1806.60px;top:1607.78px;font-size:24px;line-height:24px;color:#2b2b2b;letter-spacing:0.3px;transform:scaleX(1.03);transform-origin:0 0;">0.00</div>
<svg class="abs" style="left:902.6px;top:1607.5px" width="19" height="20" viewBox="0 0 19 20"><g fill="none" stroke="#6e6e6e" stroke-width="1.05" stroke-linejoin="round" stroke-linecap="round"><path d="M3.1 14.9 L2.6 11.6 L12.6 1.2 Q14.2 0.2 15.6 1.6 Q17 3 16 4.6 L6.2 14.6 Z"/><path d="M0.4 18.6H18.2"/></g></svg>
<svg class="abs" style="left:1189.2px;top:1607.5px" width="19" height="20" viewBox="0 0 19 20"><g fill="none" stroke="#6e6e6e" stroke-width="1.05" stroke-linejoin="round" stroke-linecap="round"><path d="M3.1 14.9 L2.6 11.6 L12.6 1.2 Q14.2 0.2 15.6 1.6 Q17 3 16 4.6 L6.2 14.6 Z"/><path d="M0.4 18.6H18.2"/></g></svg>
<svg class="abs" style="left:956.3px;top:1605.3px" width="34" height="30" viewBox="-17 -15 34 30"><path d="M0 -12.2 L14.2 12.4 H-14.2 Z" fill="#f4071f" stroke="#f4071f" stroke-width="1.4" stroke-linejoin="round"/><path d="M-1.5 -4.6 H1.5 L1.0 5.0 H-1.0 Z" fill="#fbe9ea"/><rect x="-1.2" y="6.4" width="2.4" height="2.5" fill="#fbe9ea"/></svg>
<div class="t" id="r6po" style="left:206.96px;top:1680.68px;font-size:24px;line-height:24px;color:#2b2b2b;transform:scaleX(0.9391);transform-origin:0 0;">1104</div>
<div class="t" id="r6pc" style="left:767.00px;top:1680.68px;font-size:24px;line-height:24px;color:#2b2b2b;transform:scaleX(0.8615);transform-origin:0 0;">0</div>
<div class="t" id="r6bud" style="left:1026.80px;top:1680.68px;font-size:24px;line-height:24px;color:#2b2b2b;transform:scaleX(1.0836);transform-origin:0 0;">$0.00</div>
<div class="t" id="r6inc" style="left:1236.00px;top:1680.68px;font-size:24px;line-height:24px;color:#2b2b2b;transform:scaleX(1.0633);transform-origin:0 0;text-decoration:underline dotted #333;text-decoration-thickness:1.5px;text-underline-offset:1px;">0.00</div>
<div class="t" id="r6use" style="left:1411.83px;top:1680.68px;font-size:24px;line-height:24px;color:#2b2b2b;transform:scaleX(1.0667);transform-origin:0 0;">N/A</div>
<div class="t" id="r6est" style="left:1596.40px;top:1680.68px;font-size:24px;line-height:24px;color:#2b2b2b;transform:scaleX(1.0836);transform-origin:0 0;">$0.00</div>
<div class="t" id="r6bh" style="left:1806.60px;top:1680.68px;font-size:24px;line-height:24px;color:#2b2b2b;letter-spacing:0.3px;transform:scaleX(1.03);transform-origin:0 0;">0.00</div>
<svg class="abs" style="left:902.6px;top:1680.4px" width="19" height="20" viewBox="0 0 19 20"><g fill="none" stroke="#6e6e6e" stroke-width="1.05" stroke-linejoin="round" stroke-linecap="round"><path d="M3.1 14.9 L2.6 11.6 L12.6 1.2 Q14.2 0.2 15.6 1.6 Q17 3 16 4.6 L6.2 14.6 Z"/><path d="M0.4 18.6H18.2"/></g></svg>
<svg class="abs" style="left:1189.2px;top:1680.4px" width="19" height="20" viewBox="0 0 19 20"><g fill="none" stroke="#6e6e6e" stroke-width="1.05" stroke-linejoin="round" stroke-linecap="round"><path d="M3.1 14.9 L2.6 11.6 L12.6 1.2 Q14.2 0.2 15.6 1.6 Q17 3 16 4.6 L6.2 14.6 Z"/><path d="M0.4 18.6H18.2"/></g></svg>
<svg class="abs" style="left:956.3px;top:1677.0px" width="34" height="30" viewBox="-17 -15 34 30"><path d="M0 -12.2 L14.2 12.4 H-14.2 Z" fill="#f4071f" stroke="#f4071f" stroke-width="1.4" stroke-linejoin="round"/><path d="M-1.5 -4.6 H1.5 L1.0 5.0 H-1.0 Z" fill="#fbe9ea"/><rect x="-1.2" y="6.4" width="2.4" height="2.5" fill="#fbe9ea"/></svg>
<div class="t" id="r5wo1" style="left:532.44px;top:1592.98px;font-size:24px;line-height:24px;color:#2b2b2b;letter-spacing:0.3px;transform:scaleX(1.0558);transform-origin:0 0;text-decoration:underline solid #333;text-decoration-thickness:1.3px;text-underline-offset:2px;">Onboarding</div>
<div class="t" id="r5wo2" style="left:532.46px;top:1620.98px;font-size:24px;line-height:24px;color:#2b2b2b;letter-spacing:0.3px;transform:scaleX(1.0426);transform-origin:0 0;text-decoration:underline dotted #333;text-decoration-thickness:1.5px;text-underline-offset:2px;">Demo-WO</div>
<div class="t" id="r6wo1" style="left:532.45px;top:1678.28px;font-size:24px;line-height:24px;color:#2b2b2b;letter-spacing:0.3px;transform:scaleX(1.05);transform-origin:0 0;text-decoration:underline solid #333;text-decoration-thickness:1.3px;text-underline-offset:2px;">Onboarding Demo</div>
</div>
</body>
</html>
